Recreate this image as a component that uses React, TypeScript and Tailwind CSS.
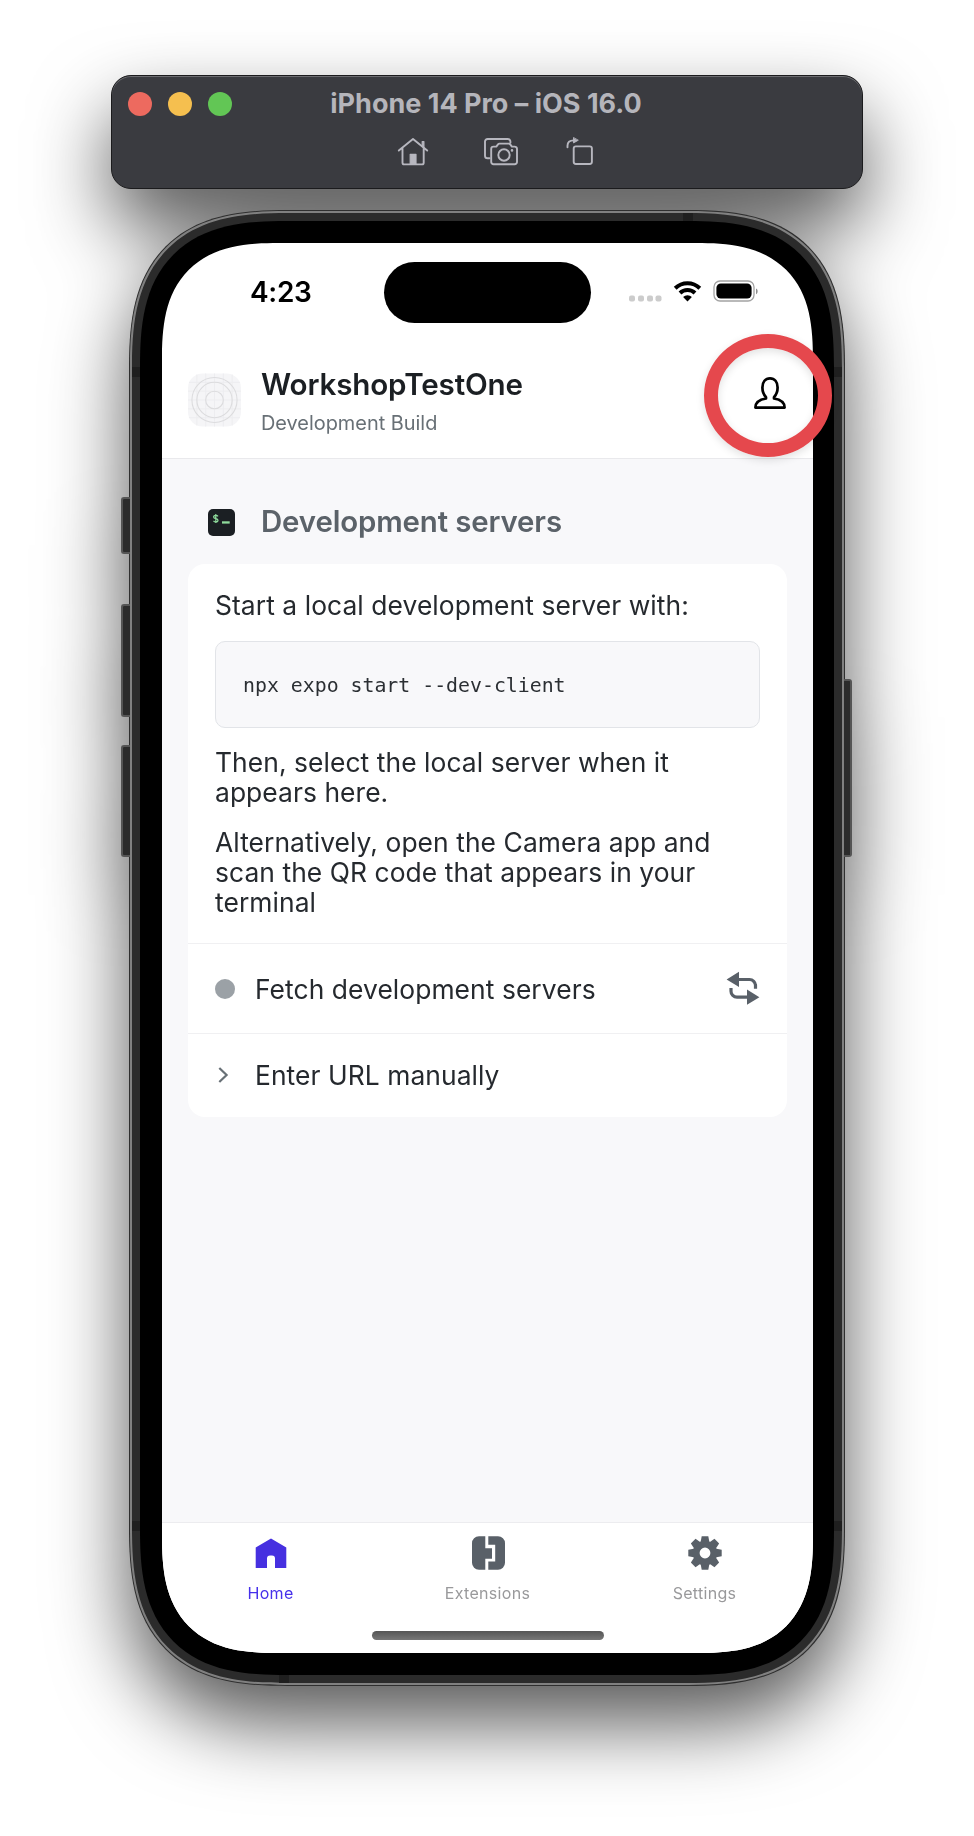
import React from "react";

const frameShape = "[corner-shape:superellipse(1.41)]";

function HomeOutline() {
  return (
    <svg width="32" height="30" viewBox="0 0 32 30" fill="none" stroke="#b7b7bf" strokeWidth="1.9" strokeLinecap="round" strokeLinejoin="round">
      <path d="M1.800 13.600 16 2 30.200 13.600M5.500 11.300v14.500a1.600 1.600 0 0 0 1.600 1.600h18a1.600 1.600 0 0 0 1.600-1.600V11.300" />
      <path d="M25.200 4.600h1.700v6.200l-1.700-1.400z" fill="#b7b7bf" strokeWidth="1.200" />
      <path d="M13.200 17.300h5.800v10.100h-5.800z" fill="#b7b7bf" strokeWidth="1.200" />
    </svg>
  );
}

function CameraStack() {
  return (
    <svg width="36" height="30" viewBox="0 0 36 30" fill="none" stroke="#b7b7bf" strokeWidth="1.9" strokeLinecap="round" strokeLinejoin="round">
      <path d="M6.500 21.300H4.600A2.600 2.600 0 0 1 2 18.700V4.600A2.600 2.600 0 0 1 4.600 2h20.200a2.600 2.600 0 0 1 2.600 2.600v1.200" />
      <path d="M10.500 9.600h2.800l1.700-2.200a2 2 0 0 1 1.500-.8h9.200a2 2 0 0 1 1.500.8l1.700 2.200h2.800a2.300 2.300 0 0 1 2.300 2.300v13a2.300 2.300 0 0 1-2.300 2.300H10.500a2.300 2.300 0 0 1-2.300-2.300v-13a2.300 2.300 0 0 1 2.300-2.300z" />
      <circle cx="21" cy="18" r="5.700" />
      <circle cx="29" cy="13.400" r=".6" fill="#b7b7bf" strokeWidth="1.400" />
    </svg>
  );
}

function RotateSquare() {
  return (
    <svg width="28" height="30" viewBox="0 0 28 30" fill="none" stroke="#b7b7bf" strokeWidth="1.9" strokeLinecap="round" strokeLinejoin="round">
      <rect x="7.700" y="9.400" width="18.200" height="17.600" rx="2.200" />
      <path d="M1.500 10.200V8.700c0-3.300 2.300-5.300 6.300-5.300" />
      <path d="M7.500.9v5L12 3.400z" fill="#b7b7bf" strokeWidth=".9" />
    </svg>
  );
}

function TitleBar() {
  return (
    <div className="h-[114px] w-[752px] shrink-0 rounded-[20px] border border-[#1b1b1d] bg-[#3a3b40] shadow-[inset_0_1px_0_#6c6c70] grid grid-cols-[1fr_auto_1fr] grid-rows-[56px_1fr] px-4">
      <div className="flex items-center gap-4">
        <span className="size-6 rounded-full bg-[#ed6a5f]" />
        <span className="size-6 rounded-full bg-[#f5bf4f]" />
        <span className="size-6 rounded-full bg-[#62c655]" />
      </div>
      <h1 className="pr-[2px] text-[27px] font-bold leading-[55px] whitespace-nowrap text-[#b5b5bb]">iPhone 14 Pro – iOS 16.0</h1>
      <span />
      <div className="col-span-3 flex items-start pl-[269px] pt-[5px]">
        <HomeOutline />
        <div className="w-[54px]" />
        <CameraStack />
        <div className="w-[47px]" />
        <RotateSquare />
      </div>
    </div>
  );
}

function StatusBar() {
  return (
    <div className="flex h-[96px] shrink-0 items-start pt-[18px]">
      <span className="w-[222px] pl-[88px] pt-[13px] text-[28px] font-semibold leading-9 tracking-[-0.3px] text-black">4:23</span>
      <div className="mt-[0.5px] h-[61px] w-[207px] rounded-full bg-black" />
      <div className="flex items-center pl-[38px] pt-[18px]">
        <svg width="34" height="24" viewBox="0 0 34 24" fill="#cccccc">
          <rect x="0" y="16.500" width="6" height="6" rx="2" />
          <rect x="9" y="16.500" width="6" height="6" rx="2" />
          <rect x="18" y="16.500" width="6" height="6" rx="2" />
          <rect x="26.500" y="16.500" width="6" height="6" rx="2" />
        </svg>
        <svg className="ml-[10px]" width="30" height="24" viewBox="0 0 30 24" fill="none" stroke="#000" strokeWidth="4">
          <path d="M2.200 9.200a17.600 17.600 0 0 1 24.600 0" />
          <path d="M7 14a10.700 10.700 0 0 1 15 0" />
          <path d="M14.500 22.500 10.100 18a6.300 6.300 0 0 1 8.800 0z" fill="#000" stroke="none" />
        </svg>
        <svg className="ml-[10px]" width="46" height="24" viewBox="0 0 46 24" fill="none">
          <rect x="1" y="2" width="40" height="20" rx="6" stroke="#a3a3a3" strokeWidth="1.300" />
          <rect x="3.400" y="4.500" width="35.200" height="15" rx="4.500" fill="#000" />
          <path d="M43 9.500c2.200.7 2.200 5 0 5.700z" fill="#8e8e8e" />
        </svg>
      </div>
    </div>
  );
}

function AppIcon() {
  return (
    <svg width="53" height="54" viewBox="0 0 54 54" fill="none">
      <rect width="54" height="54" rx="15" fill="#f5f5f7" />
      <g stroke="#ededf0" strokeWidth="1">
        <path d="M9 1v52M18 0v54M27 0v54M36 0v54M45 1v52M1 9h52M0 18h54M0 27h54M0 36h54M1 45h52" />
      </g>
      <g stroke="#dcdcde" strokeWidth="1.100">
        <circle cx="27" cy="27" r="9" />
        <circle cx="27" cy="27" r="18" />
        <circle cx="27" cy="27" r="23" />
      </g>
    </svg>
  );
}

function UserIcon() {
  return (
    <svg width="34" height="34" viewBox="0 0 34 34" fill="none" stroke="#000" strokeWidth="2.700" strokeLinejoin="round" strokeLinecap="round">
      <path d="M13 22.500v-1.300c-1.900-2-3.600-5.500-3.600-9.700C9.400 6 12.400 2.400 17 2.400s7.600 3.600 7.600 9.100c0 4.200-1.700 7.700-3.600 9.700v1.300c6.500 1 10.600 4 10.600 9.100H2.400c0-5.100 4.100-8.100 10.600-9.100z" />
    </svg>
  );
}

function AppHeader() {
  return (
    <header className="relative flex h-[120px] shrink-0 items-start border-b border-[#e9e9ec] pl-[26px]">
      <div className="pt-[34px]">
        <AppIcon />
      </div>
      <div className="flex flex-col pl-5 pt-[25px]">
        <h2 className="text-[29.6px] font-semibold leading-[40px] tracking-[-0.15px] text-[#1b1f23]">WorkshopTestOne</h2>
        <p className="pt-[4px] text-[19.9px] leading-[30px] text-[#687076]">Development Build</p>
      </div>
      <div className="absolute left-[542px] top-[-5px] flex h-[123px] w-[128px] items-center justify-center rounded-[50%] border-[14px] border-[#e5484d] pb-[5px] pl-[3px] shadow-[0_3px_8px_rgba(0,0,0,0.12),inset_0_3px_8px_rgba(0,0,0,0.12)]">
        <UserIcon />
      </div>
    </header>
  );
}

function TerminalIcon() {
  return (
    <svg width="27" height="27" viewBox="0 0 27 27">
      <rect width="27" height="27" rx="5" fill="#1b1f23" />
      <path d="M10 7.300C9.500 6.600 8.700 6.300 7.800 6.300c-1.300 0-2.200.7-2.200 1.700 0 2.300 4.400 1 4.400 3.200 0 1-.9 1.700-2.200 1.700-1 0-1.800-.4-2.300-1.100M7.800 5v9" fill="none" stroke="#8fdb9c" strokeWidth="1.200" />
      <rect x="14" y="12.300" width="7.700" height="2.300" fill="#8fdb9c" />
    </svg>
  );
}

function FetchIcon() {
  return (
    <svg width="34" height="34" viewBox="0 0 34 34" fill="none">
      <path d="M12 8.500h11.500a6 6 0 0 1 6 6v3.200M22 26.200H11a6 6 0 0 1-6-6V17" stroke="#596068" strokeWidth="3.200" />
      <path d="M.6 8.400 13 .8V16zM33.400 26.200 21 18.500v15.300z" fill="#596068" />
    </svg>
  );
}

function ServersCard() {
  return (
    <section className="mx-[26px] flex flex-col rounded-[17px] bg-white text-[26.4px] leading-[30px] tracking-[0.07px] text-[#25292e]">
      <div className="flex flex-col px-[27px] pt-[26px]">
        <p>Start a local development server with:</p>
        <div className="mt-[21px] flex h-[87px] items-center rounded-[10px] border border-[#e2e4e8] bg-[#f8f8fa] pl-[27px] pt-[3px]">
          <code className="font-['DejaVu_Sans_Mono',monospace] text-[19.85px] tracking-normal text-[#2b2f33]">npx expo start --dev-client</code>
        </div>
        <p className="pt-[19px]">Then, select the local server when it<br />appears here.</p>
        <p className="pt-[20px]">Alternatively, open the Camera app and<br />scan the QR code that appears in your<br />terminal</p>
      </div>
      <div className="mt-[26px] flex h-[90px] items-center border-t border-[#f0f0f2] px-[27px]">
        <span className="size-5 rounded-full bg-[#9ba1a6]" />
        <span className="flex-1 pl-5">Fetch development servers</span>
        <div className="pb-px">
          <FetchIcon />
        </div>
      </div>
      <div className="flex h-[84px] items-center border-t border-[#f0f0f2] px-[27px] pb-[2px]">
        <svg className="ml-[3px]" width="11" height="16" viewBox="0 0 11 16" fill="none" stroke="#687076" strokeWidth="2.200">
          <path d="m1.300 1 7.300 7-7.300 7" />
        </svg>
        <span className="pl-[26px]">Enter URL manually</span>
      </div>
    </section>
  );
}

function TabBar() {
  return (
    <nav className="grid h-[131px] shrink-0 grid-cols-3 grid-rows-[86px_1fr] border-t border-[#ececef] bg-white text-[16px] tracking-[0.3px] text-[#99999b]">
      <div className="flex flex-col items-center pt-[13px] text-[#4630eb]">
        <svg width="34" height="34" viewBox="0 0 34 34" fill="#4630e0">
          <path d="M17 2.500 32.300 11.500V32H21v-9.500a3 3 0 0 0-3-3h-2a3 3 0 0 0-3 3V32H1.700V11.500z" />
        </svg>
        <span className="pt-[11px] leading-6">Home</span>
      </div>
      <div className="flex flex-col items-center pt-[13px]">
        <svg width="34" height="34" viewBox="0 0 34 34" fill="#596068">
          <path d="M8 .3h6.300v12H21v10.400h-6.700v11H8a7 7 0 0 1-7-7V7.300a7 7 0 0 1 7-7z" />
          <path d="M17.300.300H27a7 7 0 0 1 7 7v19.400a7 7 0 0 1-7 7h-9.700v-8.200h6.900V8.700h-6.900z" />
        </svg>
        <span className="pt-[11px] leading-6">Extensions</span>
      </div>
      <div className="flex flex-col items-center pt-[13px]">
        <svg width="34" height="34" viewBox="-17 -17 34 34" fill="#596068">
          <g>
            <path id="tooth" d="M-4.600-10-3.300-16.700H3.300L4.600-10z" />
            <use href="#tooth" transform="rotate(45)" />
            <use href="#tooth" transform="rotate(90)" />
            <use href="#tooth" transform="rotate(135)" />
            <use href="#tooth" transform="rotate(180)" />
            <use href="#tooth" transform="rotate(225)" />
            <use href="#tooth" transform="rotate(270)" />
            <use href="#tooth" transform="rotate(315)" />
          </g>
          <circle r="8.800" fill="none" stroke="#596068" strokeWidth="6.800" />
        </svg>
        <span className="pt-[11px] leading-6">Settings</span>
      </div>
      <div className="col-span-3 flex justify-center pt-[22px]">
        <div className="h-[9px] w-[232px] rounded-full bg-linear-to-b from-[#555] to-[#777]" />
      </div>
    </nav>
  );
}

function Phone() {
  return (
    <div className={`relative mt-[21px] h-[1476px] w-[716px] shrink-0 rounded-[159px] border border-[#2f2f2f] bg-[#808080] p-[2px] ${frameShape}`}>
      <div className="absolute left-[-9px] top-[286px] h-[57px] w-[9px] rounded-l-[3px] border-2 border-r-0 border-[#555] bg-[#2b2b2b]" />
      <div className="absolute left-[-9px] top-[393px] h-[113px] w-[9px] rounded-l-[3px] border-2 border-r-0 border-[#555] bg-[#2b2b2b]" />
      <div className="absolute left-[-9px] top-[534px] h-[112px] w-[9px] rounded-l-[3px] border-2 border-r-0 border-[#555] bg-[#2b2b2b]" />
      <div className="absolute right-[-8px] top-[468px] h-[178px] w-[8px] rounded-r-[3px] border-2 border-l-0 border-[#555] bg-[#2b2b2b]" />
      <div className={`relative size-full rounded-[156px] bg-[#2b2b2b] p-[8px] ${frameShape}`}>
        <div className="absolute left-0 top-[154px] h-[10px] w-full bg-[#1f1f1f]" />
        <div className="absolute bottom-[152px] left-0 h-[10px] w-full bg-[#1f1f1f]" />
        <div className="absolute left-[551px] top-0 h-3 w-[10px] bg-[#1f1f1f]" />
        <div className="absolute bottom-0 left-[147px] h-3 w-[10px] bg-[#1f1f1f]" />
        <div className={`relative size-full rounded-[146px] bg-black p-[22px] pr-[21px] ${frameShape}`}>
          <main className={`flex size-full flex-col rounded-[117px] bg-white ${frameShape}`}>
            <StatusBar />
            <AppHeader />
            <div className="flex flex-1 flex-col bg-[#f8f8fa]">
              <div className="flex h-[105px] items-center pl-[46px] pt-[21px]">
                <TerminalIcon />
                <h3 className="pl-[26px] text-[29.4px] font-semibold leading-10 tracking-[-0.12px] text-[#5b6269]">Development servers</h3>
              </div>
              <ServersCard />
            </div>
            <div className="overflow-hidden rounded-b-[117px] [corner-shape:superellipse(1.41)]">
              <TabBar />
            </div>
          </main>
        </div>
      </div>
    </div>
  );
}

export default function App() {
  return (
    <div className="h-[1836px] w-[974px] overflow-hidden bg-white font-['Inter',sans-serif]">
      <div className="flex flex-col items-center pt-[75px] [filter:drop-shadow(0_38px_39px_rgba(0,0,0,0.65))]">
        <TitleBar />
        <Phone />
      </div>
    </div>
  );
}
